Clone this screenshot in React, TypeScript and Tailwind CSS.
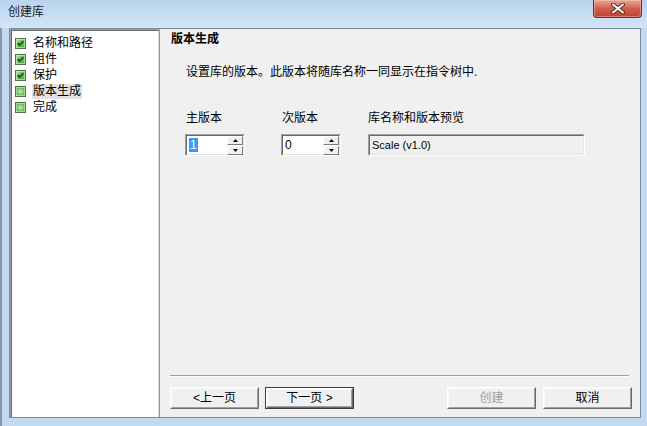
import React from "react";

const steps = [
  { label: "名称和路径", done: true },
  { label: "组件", done: true },
  { label: "保护", done: true },
  { label: "版本生成", done: false, current: true },
  { label: "完成", done: false },
];

function StateBox({ checked }: { checked: boolean }) {
  return (
    <svg width="11" height="11" viewBox="0 0 11 11" className="shrink-0">
      <defs>
        <radialGradient id="cbOff" cx="50%" cy="50%" r="65%">
          <stop offset="0%" stopColor="#c4eeb2" />
          <stop offset="100%" stopColor="#44b236" />
        </radialGradient>
        <linearGradient id="cbOn" x1="0" y1="0" x2="1" y2="1">
          <stop offset="0%" stopColor="#9fe08c" />
          <stop offset="100%" stopColor="#3fae33" />
        </linearGradient>
      </defs>
      <rect x="0.5" y="0.5" width="10" height="10" fill="#eef8ea" stroke="#4f744c" />
      <rect x="1.5" y="1.5" width="8" height="8" fill={checked ? "url(#cbOn)" : "url(#cbOff)"} />
      {checked && (
        <path d="M2.6 5.2 L4.5 7.2 L8.4 3.1" stroke="#165c12" strokeWidth="1.7" fill="none" />
      )}
    </svg>
  );
}

function SpinBox({ value, selected }: { value: string; selected?: boolean }) {
  return (
    <div className="flex h-[22px] w-[60px] border-t border-l border-[#a0a0a0] border-b-white border-r-white border-b border-r">
      <div className="flex flex-1 items-center border-t border-l border-[#696969] border-b border-r border-b-[#e3e3e3] border-r-[#e3e3e3] bg-white">
        <div className="flex-1 pl-[2px] text-[12px] leading-[14px]">
          {selected ? <span className="bg-[#3399ff] px-[1px] text-white">{value}</span> : value}
        </div>
        <div className="flex flex-col gap-[1px]">
          <SpinButton up />
          <SpinButton />
        </div>
      </div>
    </div>
  );
}

function SpinButton({ up }: { up?: boolean }) {
  return (
    <div className="flex h-[9px] w-[16px] items-center justify-center border border-t-white border-l-white border-b-[#7a7a7a] border-r-[#7a7a7a] bg-[#f0f0f0]">
      <svg width="5" height="3" viewBox="0 0 5 3">
        <path d={up ? "M2.5 0 L5 3 L0 3 Z" : "M0 0 L5 0 L2.5 3 Z"} fill="#000" />
      </svg>
    </div>
  );
}

function Btn({
  children,
  primary,
  disabled,
}: {
  children: React.ReactNode;
  primary?: boolean;
  disabled?: boolean;
}) {
  const face = (
    <div className="flex h-full w-full items-center justify-center border border-t-white border-l-white border-b-[#696969] border-r-[#696969] bg-[#f0f0f0]">
      <div className="flex h-full w-full items-center justify-center border border-t-[#f8f8f8] border-l-[#f8f8f8] border-b-[#a0a0a0] border-r-[#a0a0a0]">
        <span className={disabled ? "text-[#a0a0a0]" : "text-black"}>{children}</span>
      </div>
    </div>
  );
  return (
    <div className={`h-[22px] w-[89px] ${primary ? "border border-[#3c3c3c]" : ""}`}>{face}</div>
  );
}

export default function App() {
  return (
    <div className="flex h-[426px] w-[647px] flex-col overflow-hidden bg-[#c2d9f0] font-['Liberation_Sans','Noto_Sans_CJK_SC',sans-serif] text-[12px] leading-[16px] text-black">
      {/* 标题栏 */}
      <div className="flex h-[28px] shrink-0 items-start bg-gradient-to-b from-[#bad4ee] via-[#c6ddf3] to-[#d2e5f7] pr-[5px] pl-[8px]">
        <span className="mt-[4px] text-[#1a1a1a]">创建库</span>
        <div className="flex-1" />
        <div className="flex h-[18px] w-[49px] items-center justify-center rounded-b-[4px] border border-t-0 border-[#7a2a20] bg-gradient-to-b from-[#e9a796] via-[#d0604b] to-[#c2402c] shadow-[inset_0_0_0_1px_rgba(255,200,190,0.45)]">
          <svg width="14" height="11" viewBox="0 0 14 11">
            <path d="M2 1.5 L12 9.5 M12 1.5 L2 9.5" stroke="#5a2b25" strokeWidth="4" strokeLinecap="round" />
            <path d="M2 1.5 L12 9.5 M12 1.5 L2 9.5" stroke="#ffffff" strokeWidth="2" strokeLinecap="round" />
          </svg>
        </div>
      </div>

      {/* 窗口主体 */}
      <div className="flex min-h-0 flex-1 border-l-[2px] border-[#8696a6] pr-[6px] pb-[8px] pl-[7px]">
        <div className="flex flex-1 border border-[#7c8a98] bg-[#f0f0f0]">
          {/* 左侧步骤树 */}
          <div className="w-[150px] shrink-0 border-t border-l border-r border-[#a0a0a0] border-r-[#9a9a9a]">
            <div className="h-full border-t border-l border-r border-[#696969] border-r-[#dcdcdc] bg-white pt-[4px] pl-[3px]">
              {steps.map((s) => (
                <div key={s.label} className="flex h-[16px] items-center gap-[6px]">
                  <StateBox checked={s.done} />
                  <span className={`h-[15px] px-[1px] leading-[15px] ${s.current ? "bg-[#e2e2e2]" : ""}`}>
                    {s.label}
                  </span>
                </div>
              ))}
            </div>
          </div>

          {/* 右侧内容 */}
          <div className="flex flex-1 flex-col pt-[2px]">
            <div className="pl-[11px] font-bold">版本生成</div>
            <div className="mt-[17px] pl-[26px]">设置库的版本。此版本将随库名称一同显示在指令树中.</div>

            <div className="mt-[30px] flex pl-[25px]">
              <div className="w-[60px]">
                <div className="pl-[1px]">主版本</div>
                <div className="mt-[8px]">
                  <SpinBox value="1" selected />
                </div>
              </div>
              <div className="ml-[36px] w-[60px]">
                <div className="pl-[1px]">次版本</div>
                <div className="mt-[8px]">
                  <SpinBox value="0" />
                </div>
              </div>
              <div className="ml-[27px] w-[217px]">
                <div>库名称和版本预览</div>
                <div className="mt-[8px] h-[22px] border-t border-l border-[#a0a0a0] border-b border-r border-b-white border-r-white">
                  <div className="flex h-full items-center border-t border-l border-[#696969] border-b border-r border-b-[#e3e3e3] border-r-[#e3e3e3] bg-[#f0f0f0] pl-[2px] text-[11px]">
                    Scale (v1.0)
                  </div>
                </div>
              </div>
            </div>

            <div className="flex-1" />

            <div className="mr-[11px] ml-[10px] border-t border-b border-t-[#a0a0a0] border-b-white" />

            <div className="mt-[10px] flex pr-[8px] pb-[8px] pl-[10px]">
              <Btn>&lt;上一页</Btn>
              <div className="ml-[6px]">
                <Btn primary>下一页 &gt;</Btn>
              </div>
              <div className="flex-1" />
              <Btn disabled>创建</Btn>
              <div className="ml-[7px]">
                <Btn>取消</Btn>
              </div>
            </div>
          </div>
        </div>
      </div>
    </div>
  );
}
